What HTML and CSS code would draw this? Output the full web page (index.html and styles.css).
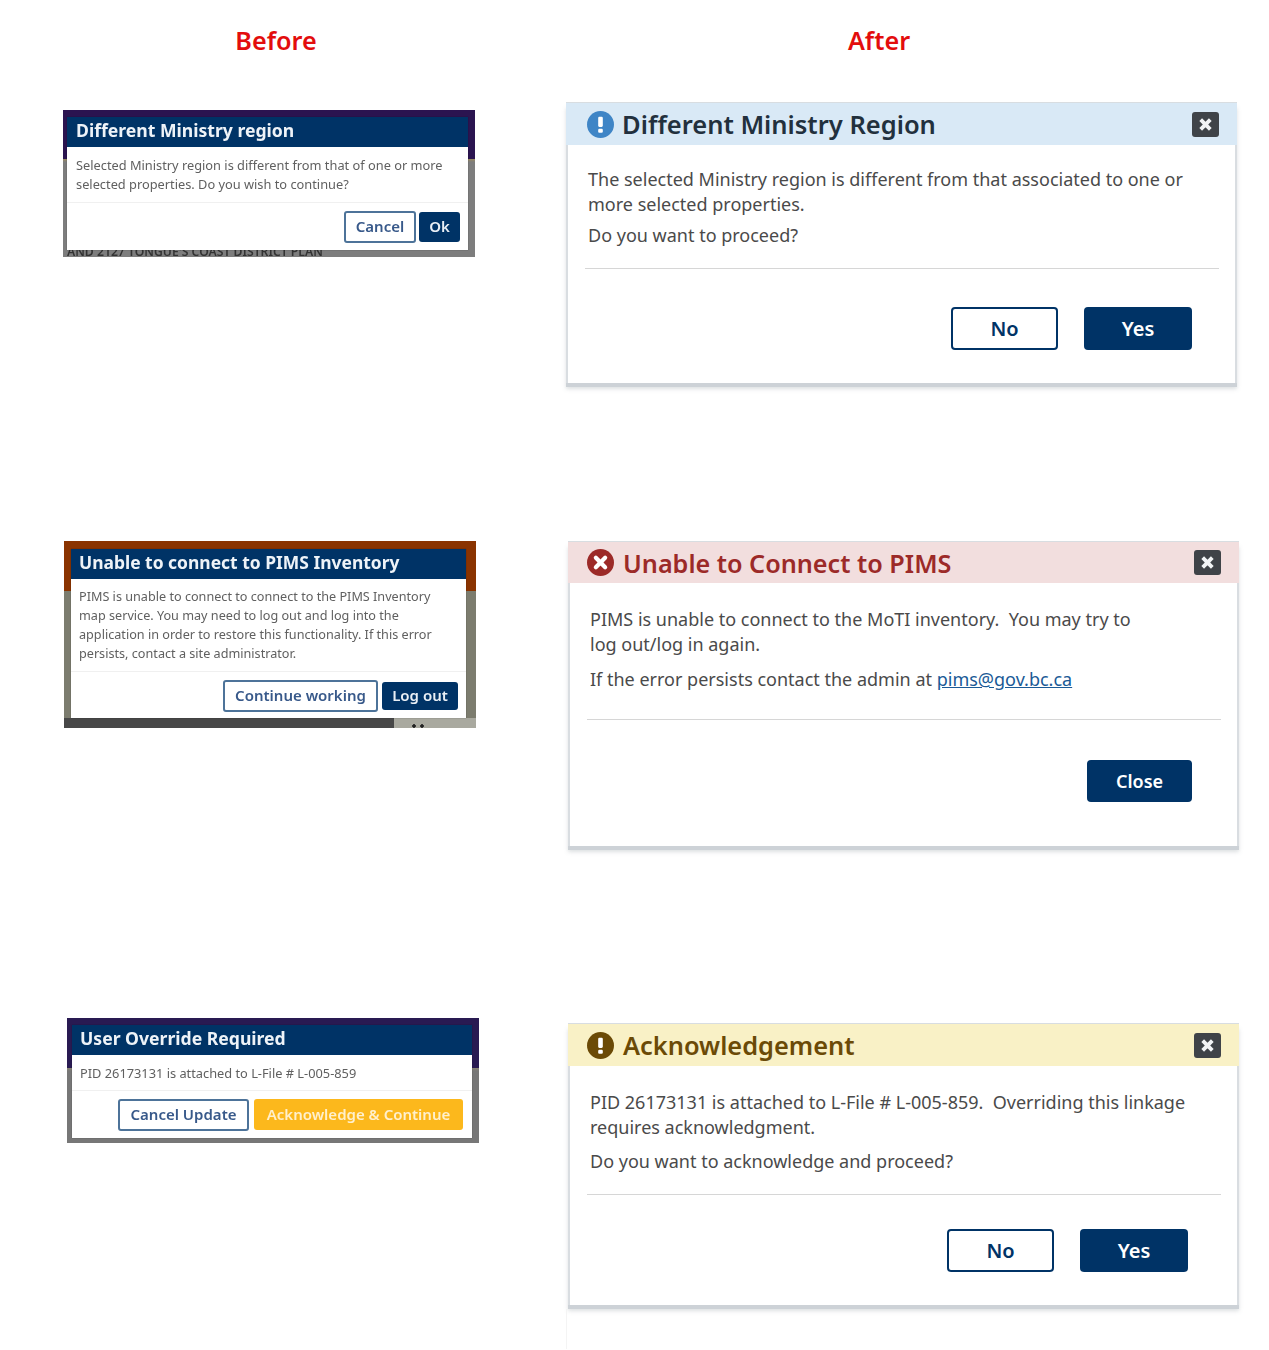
FILE: index.html
```html
<!DOCTYPE html>
<html lang="en">
<head>
<meta charset="utf-8">
<title>Before and After dialogs</title>
<link rel="stylesheet" href="styles.css">
</head>
<body>
<main class="page">
  <header class="labels">
    <h2 class="label label-before">Before</h2>
    <h2 class="label label-after">After</h2>
  </header>

  <section class="row row-1">
    <div class="old old-1">
      <div class="old-dialog">
        <div class="old-head">Different Ministry region</div>
        <div class="old-body">Selected Ministry region is different from that of one or more<br>selected properties. Do you wish to continue?</div>
        <div class="old-actions">
          <span class="old-btn old-outline">Cancel</span>
          <span class="old-btn old-solid">Ok</span>
        </div>
      </div>
      <div class="old-under">AND 2127 TONGUE'S COAST DISTRICT PLAN</div>
    </div>
    <div class="card card-info">
      <div class="card-head">
        <svg class="status" viewBox="0 0 28 28"><circle cx="14" cy="14" r="14" fill="#3f85c6"/><rect x="11.6" y="6" width="4.8" height="10.5" rx="1.2" fill="#fff"/><rect x="11.6" y="18.4" width="4.8" height="4.2" rx="1.2" fill="#fff"/></svg>
        <h3 class="card-title">Different Ministry Region</h3>
        <span class="close"><svg viewBox="0 0 27 26"><path d="M8.5 8l10 10M18.5 8l-10 10" stroke="#f2f4f6" stroke-width="4"/></svg></span>
      </div>
      <div class="card-body">
        <p>The selected Ministry region is different from that associated to one or<br>more selected properties.</p>
        <p class="second">Do you want to proceed?</p>
      </div>
      <div class="divider"></div>
      <div class="actions">
        <button class="btn btn-outline">No</button>
        <button class="btn btn-solid">Yes</button>
      </div>
    </div>
  </section>

  <section class="row row-2">
    <div class="old old-2">
      <div class="old-dialog">
        <div class="old-head">Unable to connect to PIMS Inventory</div>
        <div class="old-body">PIMS is unable to connect to connect to the PIMS Inventory<br>map service. You may need to log out and log into the<br>application in order to restore this functionality. If this error<br>persists, contact a site administrator.</div>
        <div class="old-actions">
          <span class="old-btn old-outline">Continue working</span>
          <span class="old-btn old-solid">Log out</span>
        </div>
      </div>
      <div class="old-dots"></div>
    </div>
    <div class="card card-error">
      <div class="card-head">
        <svg class="status" viewBox="0 0 28 28"><circle cx="14" cy="14" r="14" fill="#9c2a28"/><path d="M9.2 9.2l9.6 9.6M18.8 9.2l-9.6 9.6" stroke="#fff" stroke-width="4.4" stroke-linecap="round"/></svg>
        <h3 class="card-title">Unable to Connect to PIMS</h3>
        <span class="close"><svg viewBox="0 0 27 26"><path d="M8.5 8l10 10M18.5 8l-10 10" stroke="#f2f4f6" stroke-width="4"/></svg></span>
      </div>
      <div class="card-body">
        <p>PIMS is unable to connect to the MoTI inventory.&nbsp; You may try to<br>log out/log in again.</p>
        <p class="second">If the error persists contact the admin at <a class="mail" href="#">pims@gov.bc.ca</a></p>
      </div>
      <div class="divider"></div>
      <div class="actions">
        <button class="btn btn-solid">Close</button>
      </div>
    </div>
  </section>

  <section class="row row-3">
    <div class="old old-3">
      <div class="old-dialog">
        <div class="old-head">User Override Required</div>
        <div class="old-body">PID 26173131 is attached to L-File # L-005-859</div>
        <div class="old-actions">
          <span class="old-btn old-outline">Cancel Update</span>
          <span class="old-btn old-amber">Acknowledge &amp; Continue</span>
        </div>
      </div>
    </div>
    <div class="card card-warn">
      <div class="card-head">
        <svg class="status" viewBox="0 0 28 28"><circle cx="14" cy="14" r="14" fill="#6b4a06"/><rect x="11.6" y="6" width="4.8" height="10.5" rx="1.2" fill="#fff"/><rect x="11.6" y="18.4" width="4.8" height="4.2" rx="1.2" fill="#fff"/></svg>
        <h3 class="card-title">Acknowledgement</h3>
        <span class="close"><svg viewBox="0 0 27 26"><path d="M8.5 8l10 10M18.5 8l-10 10" stroke="#f2f4f6" stroke-width="4"/></svg></span>
      </div>
      <div class="card-body">
        <p>PID 26173131 is attached to L-File # L-005-859.&nbsp; Overriding this linkage<br>requires acknowledgment.</p>
        <p class="second">Do you want to acknowledge and proceed?</p>
      </div>
      <div class="divider"></div>
      <div class="actions">
        <button class="btn btn-outline">No</button>
        <button class="btn btn-solid">Yes</button>
      </div>
    </div>
    <div class="trail"></div>
  </section>
</main>
</body>
</html>
```
FILE: styles.css
```css
* { box-sizing: border-box; }
html, body { margin: 0; padding: 0; background: #fff; }
body { font-family: "Noto Sans", "Liberation Sans", sans-serif; color: #494949; }
.page { width: 1269px; height: 1350px; overflow: hidden; }

.labels { height: 102px; padding-top: 23px; display: grid; grid-template-columns: 552px 1fr; }
.label { margin: 0; font-size: 25.2px; line-height: 34px; font-weight: 600; color: #e30d0d; text-align: center; }
.label-after { width: 654px; }

.row { display: grid; grid-template-columns: 566px 1fr; align-items: start; }
.row-1 { height: 439px; }
.row-2 { height: 482px; }
.row-3 { height: 327px; }

/* Before */
.old { position: relative; width: 412px; overflow: hidden; filter: blur(0.7px); }
.old-dialog { position: relative; z-index: 1; background: #fff; display: flex; flex-direction: column; box-shadow: 0 0 1px rgba(0,0,0,.4); }
.old-head { background: #003366; color: #eef3f8; font-weight: 700; font-size: 17.6px; line-height: 26px; height: 30px; }
.old-body { color: #606060; font-size: 12.8px; line-height: 19px; }
.old-actions { display: flex; justify-content: flex-end; gap: 4px; border-top: 1px solid #f0f0f0; }
.old-btn { font-size: 15px; font-weight: 600; border-radius: 3px; display: flex; align-items: center; justify-content: center; line-height: 20px; padding-bottom: 2px; }
.old-outline { background: #fff; color: #38598a; border: 2px solid #4d7399; }
.old-solid { background: #003366; color: #e9eff5; }
.old-amber { background: #fcb81c; color: #fff0cd; }

.old-1 { margin: 8px 0 0 63px; height: 147px; padding: 7px 7px 0 4px; background: linear-gradient(#2b1450 0, #2b1450 49px, #9b8a5e 49px, #7d7d7d 52px); }
.old-1 .old-dialog { height: 133px; }
.old-1 .old-head { padding-left: 9px; }
.old-1 .old-body { padding: 9px 9px 8px; }
.old-1 .old-actions { padding: 8px 8px 0; gap: 3px; }
.old-1 .old-outline { width: 72px; height: 32px; }
.old-1 .old-solid { width: 41px; height: 30px; margin-top: 1px; }
.old-under { position: absolute; left: 4px; top: 134px; font-size: 12.2px; font-weight: 600; color: #333; white-space: nowrap; line-height: 16px; }

.old-2 { margin: 0 0 0 64px; height: 187px; padding: 8px 10px 10px 7px; background: linear-gradient(#8a3300 0, #8a3300 50px, #7c7c6e 50px, #7c7c6e 177px, #474747 177px); }
.old-2 .old-dialog { height: 169px; }
.old-2 .old-head { padding-left: 8px; font-size: 17.45px; }
.old-2 .old-body { padding: 8px 8px 8px; font-size: 12.65px; }
.old-2 .old-actions { padding: 8px 8px 0; }
.old-2 .old-outline { width: 155px; height: 32px; }
.old-2 .old-solid { width: 76px; height: 28px; margin-top: 2px; }
.old-dots { position: absolute; left: 330px; top: 177px; width: 82px; height: 10px; background: radial-gradient(circle at 20px 8px, #222 1.5px, transparent 2px), radial-gradient(circle at 28px 8px, #222 1.5px, transparent 2px), #a9a99f; }

.old-3 { margin: -5px 0 0 67px; height: 125px; padding: 7px 7px 5px 5px; background: linear-gradient(#291a52 0, #291a52 50px, #8a8475 50px, #777 53px); }
.old-3 .old-dialog { height: 113px; }
.old-3 .old-head { padding-left: 8px; }
.old-3 .old-body { padding: 9px 8px 7px; }
.old-3 .old-actions { padding: 8px 9px 0 8px; gap: 5px; }
.old-3 .old-outline { width: 131px; height: 32px; }
.old-3 .old-amber { width: 209px; height: 31px; }

/* After */
.card { background: #fff; width: 671px; border: solid #d9dde1; border-width: 0 2px 0 2px; box-shadow: 0 4px 0 #cdd2d7, 0 6px 4px rgba(120,130,140,.25); }
.card-head { display: flex; align-items: center; border-top: 1px solid #d8dde1; margin: 0 -2px; }
.status { width: 27px; height: 27px; flex: none; margin-left: 19px; }
.card-title { margin: 0 0 0 9px; font-size: 25.4px; line-height: 34px; font-weight: 600; flex: 1; }
.close { width: 27px; height: 25px; background: #3f4348; border-radius: 3px; margin-right: 18px; flex: none; display: flex; }
.close svg { width: 27px; height: 25px; }
.card-body { padding-left: 20px; font-size: 18px; line-height: 25px; color: #4a4a4a; }
.card-body p { margin: 0; }
.divider { height: 1px; background: #d6d6d6; margin: 0 16px 0 17px; }
.actions { display: flex; justify-content: flex-end; }
.btn { font-family: inherit; font-size: 20px; font-weight: 600; line-height: 27px; height: 43px; width: 107px; border-radius: 4px; padding: 0; }
.btn-outline { background: #fff; color: #003366; border: 2px solid #003366; }
.btn-solid { background: #003366; color: #fff; border: 0; width: 108px; }
.mail { color: #1a5a96; }
.trail { grid-column: 2; width: 1px; height: 40px; margin-top: 3px; background: #f4f4f4; }

.card-info .card-head { height: 43px; background: #d9e9f6; }
.card-info .status { margin-left: 21px; }
.card-info .card-title { color: #22303d; margin-left: 8px; font-size: 25.5px; }
.card-info .card-body { padding-top: 22px; }
.card-info .second { margin-top: 6px; }
.card-info .divider { margin-top: 20px; }
.card-info .actions { padding: 38px 43px 33px 0; gap: 26px; }

.card-error { margin-left: 2px; }
.card-error .card-head { height: 42px; background: #f2dede; }
.card-error .card-title { color: #9c2a28; font-size: 25.2px; }
.card-error .card-body { padding-top: 24px; }
.card-error .second { margin-top: 10px; }
.card-error .divider { margin-top: 27px; }
.card-error .actions { padding: 40px 45px 44px 0; }
.card-error .btn { width: 105px; height: 42px; font-size: 18px; }

.card-warn { margin-left: 2px; }
.card-warn .card-head { height: 43px; background: #f9f1c6; }
.card-warn .card-title { color: #6b4a06; }
.card-warn .card-body { padding-top: 24px; }
.card-warn .second { margin-top: 9px; }
.card-warn .divider { margin-top: 20px; }
.card-warn .actions { padding: 34px 49px 33px 0; gap: 26px; }
```
